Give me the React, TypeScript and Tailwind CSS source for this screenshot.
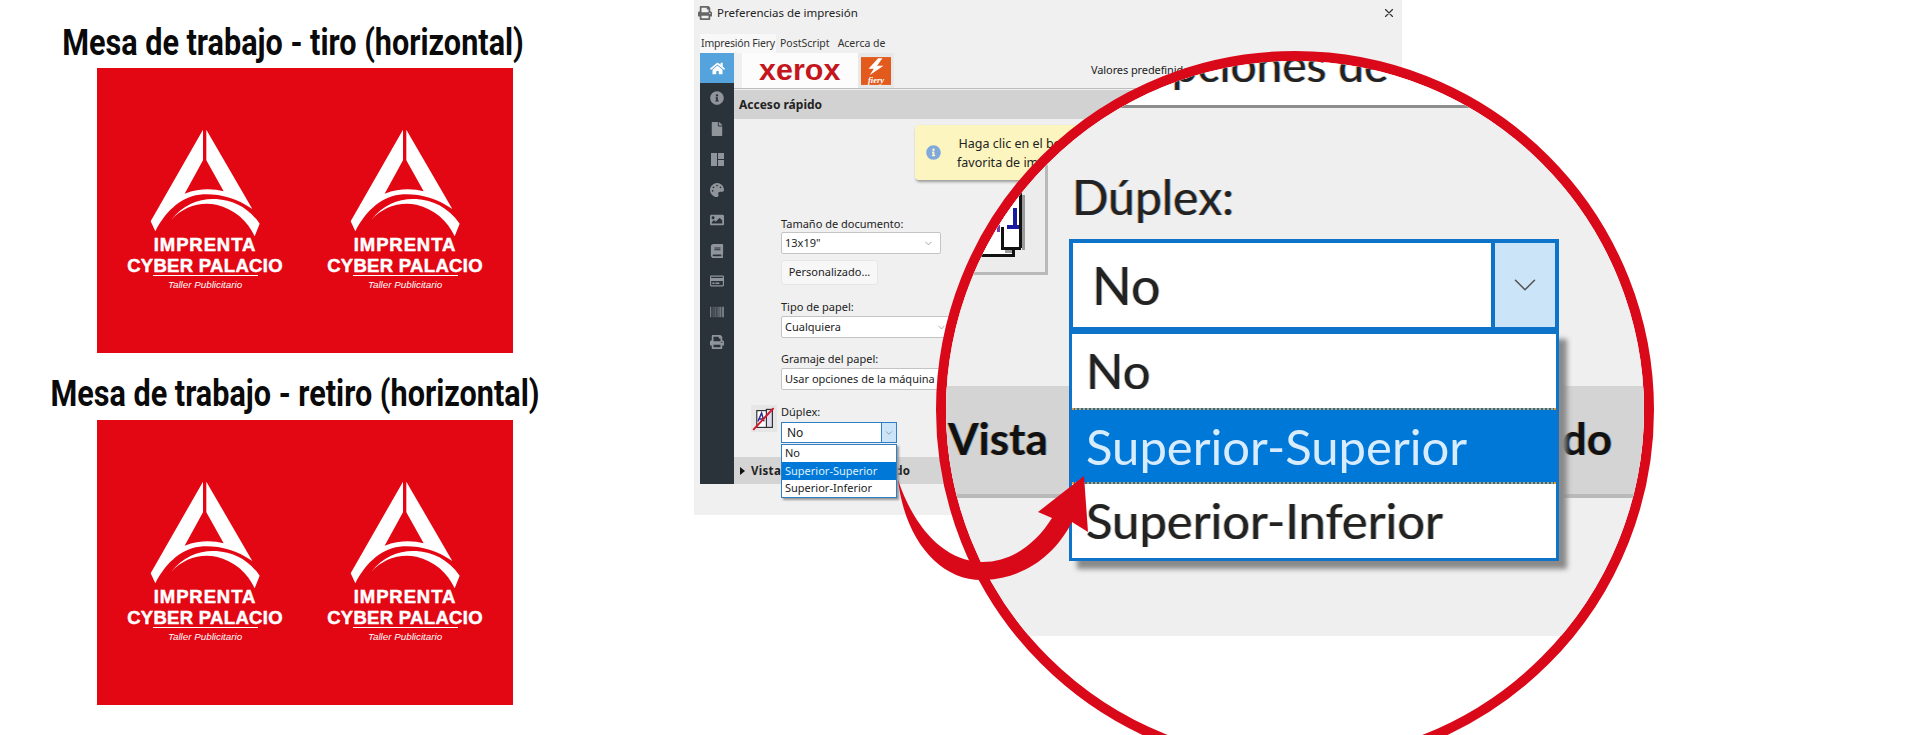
import React from "react";
import { FaHome, FaInfoCircle, FaFile, FaPalette, FaImage, FaBook, FaPrint, FaBarcode, FaRegCreditCard } from "react-icons/fa";
import { HiOutlineX } from "react-icons/hi";
import { ChevronDown } from "lucide-react";

function Logo() {
  return (
    <div className="w-[170px] flex flex-col items-center text-white [font-family:'Liberation_Sans',sans-serif]">
      <svg width="115" height="110" viewBox="85 25 345 330" fill="#fff">
        <path d="M250 30 L250 122 L195 222 C240 205 280 207 312 215 L260 122 L260 30 L398 268 C350 235 300 222 250 224 C190 228 140 270 107 335 L93 305 Z" />
        <path d="M155 300 C190 255 240 235 290 238 C340 242 385 262 420 312 L405 350 C385 305 345 268 290 255 C240 245 190 262 155 300 Z" />
      </svg>
      <div className="text-[18.5px] leading-[14px] font-bold tracking-[0.9px] [-webkit-text-stroke:0.5px_white]">IMPRENTA</div>
      <div className="text-[18.5px] leading-[15px] mt-[6px] font-bold tracking-[0.3px] whitespace-nowrap [-webkit-text-stroke:0.5px_white]">CYBER PALACIO</div>
      <div className="w-[105px] h-px bg-white mt-[2px]" />
      <div className="text-[9.8px] leading-[13px] mt-[2px] italic">Taller Publicitario</div>
    </div>
  );
}

function Board() {
  return (
    <div className="w-[416px] h-[285px] bg-[#e30613] pl-[23px] pt-[60px] flex gap-[30px]">
      <Logo />
      <Logo />
    </div>
  );
}

function Title({ children, cls }: { children: React.ReactNode; cls: string }) {
  return (
    <div className={"h-[40px] flex items-center justify-center whitespace-nowrap text-[36px] font-bold text-[#0a0a0a] [font-family:Roboto,sans-serif] " + cls}>
      {children}
    </div>
  );
}

function SmallSelect({ text, width }: { text: string; width: string }) {
  return (
    <div className={"h-[22px] bg-white border border-[#c4c4c4] rounded-[2px] flex items-center justify-between pl-[3px] pr-[6px] text-[11px] text-[#222] " + width}>
      <span className="whitespace-nowrap">{text}</span>
      <ChevronDown size={11} strokeWidth={1.2} color="#666" className="shrink-0" />
    </div>
  );
}

const sideIcons = [FaInfoCircle, FaFile, null, FaPalette, FaImage, FaBook, FaRegCreditCard, FaBarcode, FaPrint];

function Sidebar() {
  return (
    <div className="w-[34px] h-[431px] bg-[#2a323a] flex flex-col shrink-0">
      <div className="h-[30px] bg-[#55a3dc] flex items-center justify-center">
        <FaHome size={15} color="#fff" />
      </div>
      {sideIcons.map((Icon, i) => (
        <div key={i} className="h-[30.5px] flex items-center justify-center text-[#8f959b]">
          {Icon ? (
            <Icon size={14} />
          ) : (
            <div className="w-[13px] h-[13px] flex gap-[1px]">
              <div className="w-[6px] h-full bg-[#8f959b]" />
              <div className="w-[6px] flex flex-col gap-[1px]">
                <div className="h-[6px] bg-[#8f959b]" />
                <div className="h-[6px] bg-[#8f959b]" />
              </div>
            </div>
          )}
        </div>
      ))}
    </div>
  );
}

function DuplexIcon() {
  return (
    <div className="w-[26px] h-[27px] bg-[#e6e6e6] flex items-center justify-center mr-[4px] shrink-0">
      <svg width="24" height="24" viewBox="0 0 20 20">
        <rect x="4" y="3" width="11" height="14" fill="#fff" stroke="#333" strokeWidth="1" />
        <rect x="12" y="2" width="5" height="15" fill="#dde" stroke="#333" strokeWidth="1" />
        <path d="M5 12 L8 5 L10 12 M6 10 H9" fill="none" stroke="#2a2a90" strokeWidth="1.2" />
        <path d="M1 19 L18 1" stroke="#d4182a" strokeWidth="1.6" />
      </svg>
    </div>
  );
}

function Dialog() {
  return (
    <div className="w-[708px] h-[515px] bg-[#f0f0f0] [font-family:Lato,sans-serif] text-[#222] flex flex-col shrink-0">
      <div className="h-[26px] flex items-center pl-[3px] pr-[5px] text-[12px] text-[#222]">
        <FaPrint size={14} color="#666" className="ml-[1px]" />
        <span className="ml-[5px] flex-1 [font-family:'Noto_Sans',sans-serif] text-[11.5px]">Preferencias de impresión</span>
        <HiOutlineX size={14} color="#333" className="mr-[1px]" />
      </div>
      <div className="h-[27px] pl-[6px] flex items-end text-[11px] [font-family:'Noto_Sans',sans-serif] text-[#333]">
        <div className="h-[19px] w-[76px] bg-[#f8f8f8] flex items-center justify-center tracking-[-0.2px] whitespace-nowrap text-[10.5px]">Impresión Fiery</div>
        <div className="h-[19px] ml-[4px] flex items-center whitespace-nowrap text-[10.5px]">PostScript</div>
        <div className="h-[19px] ml-[8px] flex items-center whitespace-nowrap text-[10.5px]">Acerca de</div>
      </div>
      <div className="flex pl-[6px]">
        <Sidebar />
        <div className="flex-1 flex flex-col h-[431px]">
          <div className="h-[36px] flex items-stretch border-b border-[#bdbdbd]">
            <div className="ml-[8px] w-[116px] bg-[#fcfcfc] flex items-center justify-center text-[#c4161c] text-[29px] font-bold leading-none [font-family:'Liberation_Sans',sans-serif]">
              <span className="scale-x-105">xerox</span>
            </div>
            <div className="w-[36px] bg-[#e8e8e8] flex items-center justify-center">
              <svg width="30" height="28" viewBox="0 0 28 26">
                <rect width="28" height="26" fill="#e25a1c" />
                <path d="M16 1 L7 11 L12 11 L8 17 L21 8 L15 8 L20 1 Z" fill="#fff" />
                <text x="14" y="24.5" textAnchor="middle" fontSize="8" fontWeight="700" fontStyle="italic" fill="#fff" fontFamily="Liberation Serif, serif">fiery</text>
              </svg>
            </div>
            <div className="ml-[197px] self-center text-[11px] whitespace-nowrap [font-family:'Noto_Sans',sans-serif] tracking-[-0.1px]">Valores predefinidos</div>
          </div>
          <div className="h-[29px] mt-[1px] bg-[#d2d2d2] flex items-center pl-[5px] text-[12px] font-bold [font-family:'Noto_Sans',sans-serif] text-[#222]">Acceso rápido</div>
          <div className="h-[338px] flex relative">
            <div className="absolute left-[181px] top-[6px] w-[190px] h-[55px] bg-[#fdf5bf] rounded-[4px] shadow-[1px_2px_3px_#999] flex items-center pl-[11px] text-[12.5px] z-10">
              <FaInfoCircle size={15} color="#7fa8dc" />
              <div className="ml-[16px] text-center leading-[19px] [font-family:'Noto_Sans',sans-serif] whitespace-nowrap">
                <div>Haga clic en el botón</div>
                <div>favorita de impresión</div>
              </div>
            </div>
            <div className="w-[17px] shrink-0" />
            <div className="w-[30px] shrink-0 flex flex-col justify-end pb-[25px]">
              <DuplexIcon />
            </div>
            <div className="pt-[98px] w-[200px] text-[12px] [font-family:'Noto_Sans',sans-serif]">
              <div className="h-[15px] leading-[15px] text-[11px] -mt-[1px]">Tamaño de documento:</div>
              <div className="mt-[1px]"><SmallSelect text='13x19"' width="w-[160px]" /></div>
              <div className="mt-[6px] w-[97px] h-[25px] bg-[#f7f7f7] rounded-[3px] border border-[#e6e6e6] flex items-center justify-center text-[11px]">Personalizado...</div>
              <div className="mt-[14px] h-[15px] leading-[15px] text-[11px]">Tipo de papel:</div>
              <div className="mt-[2px]"><SmallSelect text="Cualquiera" width="w-[173px]" /></div>
              <div className="mt-[13px] h-[15px] leading-[15px] text-[11px]">Gramaje del papel:</div>
              <div className="mt-[2px]"><SmallSelect text="Usar opciones de la máquina" width="w-[190px]" /></div>
              <div className="mt-[14px] h-[15px] leading-[15px] text-[11px]">Dúplex:</div>
              <div className="mt-[3px] relative w-[116px] z-20">
                <div className="h-[21px] bg-white border border-[#2f7fc4] flex items-center pl-[5px] pr-0 text-[12px]">
                  <span className="flex-1">No</span>
                  <div className="w-[15px] h-full bg-[#cce4f7] border-l border-[#2f7fc4] flex items-center justify-center">
                    <ChevronDown size={10} strokeWidth={1.2} color="#555" />
                  </div>
                </div>
                <div className="absolute left-0 top-[22px] w-[116px] h-[54px] bg-white border border-[#2f7fc4] shadow-[2px_2px_2px_#999] text-[11px] flex flex-col">
                  <div className="h-[17px] flex items-center pl-[3px]">No</div>
                  <div className="h-[18px] flex items-center pl-[3px] bg-[#0078d7] text-[#dff0ff]">Superior-Superior</div>
                  <div className="h-[17px] flex items-center pl-[3px]">Superior-Inferior</div>
                </div>
              </div>
            </div>
          </div>
          <div className="h-[27px] bg-[#d4d4d4] flex items-center pl-[6px] text-[11.5px] font-bold [font-family:'Noto_Sans',sans-serif] whitespace-nowrap">
            <span className="w-0 h-0 border-y-[4px] border-y-transparent border-l-[5px] border-l-[#111]" />
            <span className="ml-[6px] tracking-[0.3px]">Vista del trabajo avanzado</span>
          </div>
        </div>
      </div>
    </div>
  );
}

const fringe = "[text-shadow:-1px_0_#c47a2c80,1px_0_#2a6fb080]";

function Magnifier() {
  return (
    <div className="absolute left-[936px] top-[51px] w-[718px] h-[718px] rounded-full border-[10px] border-[#d9091a] bg-white overflow-hidden z-30 [font-family:Lato,'Noto_Sans',sans-serif]">
      <div className="h-[47px] bg-white border-b-[3px] border-[#8d8d8d] flex items-start pl-[172px] overflow-hidden">
        <span className={"text-[46px] leading-[46px] -mt-[19px] text-[#222] whitespace-nowrap " + fringe}>r opciones de</span>
      </div>
      <div className="h-[528px] bg-[#efefef] flex flex-col relative">
        <div className="absolute -left-[46px] top-[57px] w-[148px] h-[110px] bg-[#ececec] border-r-[3px] border-b-[3px] border-[#b9b9b9] flex items-end justify-end">
          <svg width="85" height="107" viewBox="960 165 85 107" shapeRendering="crispEdges">
            <path d="M960 190 H1020 V248 H1013 V255 H960 Z" fill="#fff" />
            <path d="M1023 195 V250 M1005 251 H1015" stroke="#9a9a9a" strokeWidth="3" fill="none" />
            <path d="M1020 193 V248 M960 255 H1013 V248 M1002 227 V248 H1021" stroke="#111" strokeWidth="3" fill="none" />
            <path d="M1015 208 V226 M1007 227 H1019" stroke="#1a1aa0" strokeWidth="4" fill="none" />
            <path d="M998 225 V232" stroke="#7a3fb0" strokeWidth="3" fill="none" />
          </svg>
        </div>
        <div className={"ml-[126px] mt-[59px] h-[60px] leading-[60px] text-[48px] text-[#222] " + fringe}>Dúplex:</div>
        <div className="ml-[123px] mt-[12px] w-[490px] relative z-10">
          <div className="h-[92px] bg-white border-[4px] border-[#0d74c9] flex items-center">
            <span className={"flex-1 pl-[19px] text-[52px] text-[#222] " + fringe}>No</span>
            <div className="w-[64px] h-full bg-[#cce4f7] border-l-[4px] border-[#0d74c9] flex items-center justify-center">
              <ChevronDown size={38} strokeWidth={1} color="#555" />
            </div>
          </div>
          <div className="absolute left-0 top-[92px] w-[490px] h-[230px] bg-white border-[3px] border-[#0d74c9] shadow-[8px_8px_5px_#8a8a8a] flex flex-col text-[49px]">
            <div className={"h-[76px] flex items-center pl-[14px] text-[#222] " + fringe}>No</div>
            <div className="h-[76px] flex items-center pl-[14px] bg-[#0078d7] text-[#d8ecff] border-y-[2px] border-dotted border-[#e09a3a]">Superior-Superior</div>
            <div className={"h-[75px] flex items-center pl-[14px] text-[#222] " + fringe}>Superior-Inferior</div>
          </div>
        </div>
        <div className="mt-[55px] h-[112px] bg-[#d4d4d4] border-b-[4px] border-[#b9b9b9] flex items-center justify-between pl-[2px] pr-[32px] pb-[4px] text-[44px] font-bold text-[#111]">
          <span className={fringe}>Vista</span>
          <span className={fringe}>do</span>
        </div>
      </div>
    </div>
  );
}

function Arrow() {
  return (
    <svg className="absolute left-[890px] top-[470px] z-40" width="210" height="120" viewBox="890 470 210 120">
      <path
        d="M898 480 C905 540 940 582 985 580 C1025 578 1055 555 1072 522 L1088 532 L1084 476 L1038 512 L1052 518 C1035 545 1010 563 980 562 C945 560 915 530 898 480 Z"
        fill="#d9091a"
      />
    </svg>
  );
}

export default function App() {
  return (
    <div className="relative w-[1920px] h-[735px] bg-white overflow-hidden flex">
      <div className="w-[694px] shrink-0 pl-[97px]">
        <div className="h-[68px] flex items-end pb-[5px]">
          <Title cls="w-[416px] -ml-[12px] scale-x-[0.85]">Mesa de trabajo - tiro (horizontal)</Title>
        </div>
        <Board />
        <div className="h-[67px] flex items-end pb-[6px]">
          <Title cls="w-[416px] -ml-[10px] scale-x-[0.85]">Mesa de trabajo - retiro (horizontal)</Title>
        </div>
        <Board />
      </div>
      <Dialog />
      <Magnifier />
      <Arrow />
    </div>
  );
}
